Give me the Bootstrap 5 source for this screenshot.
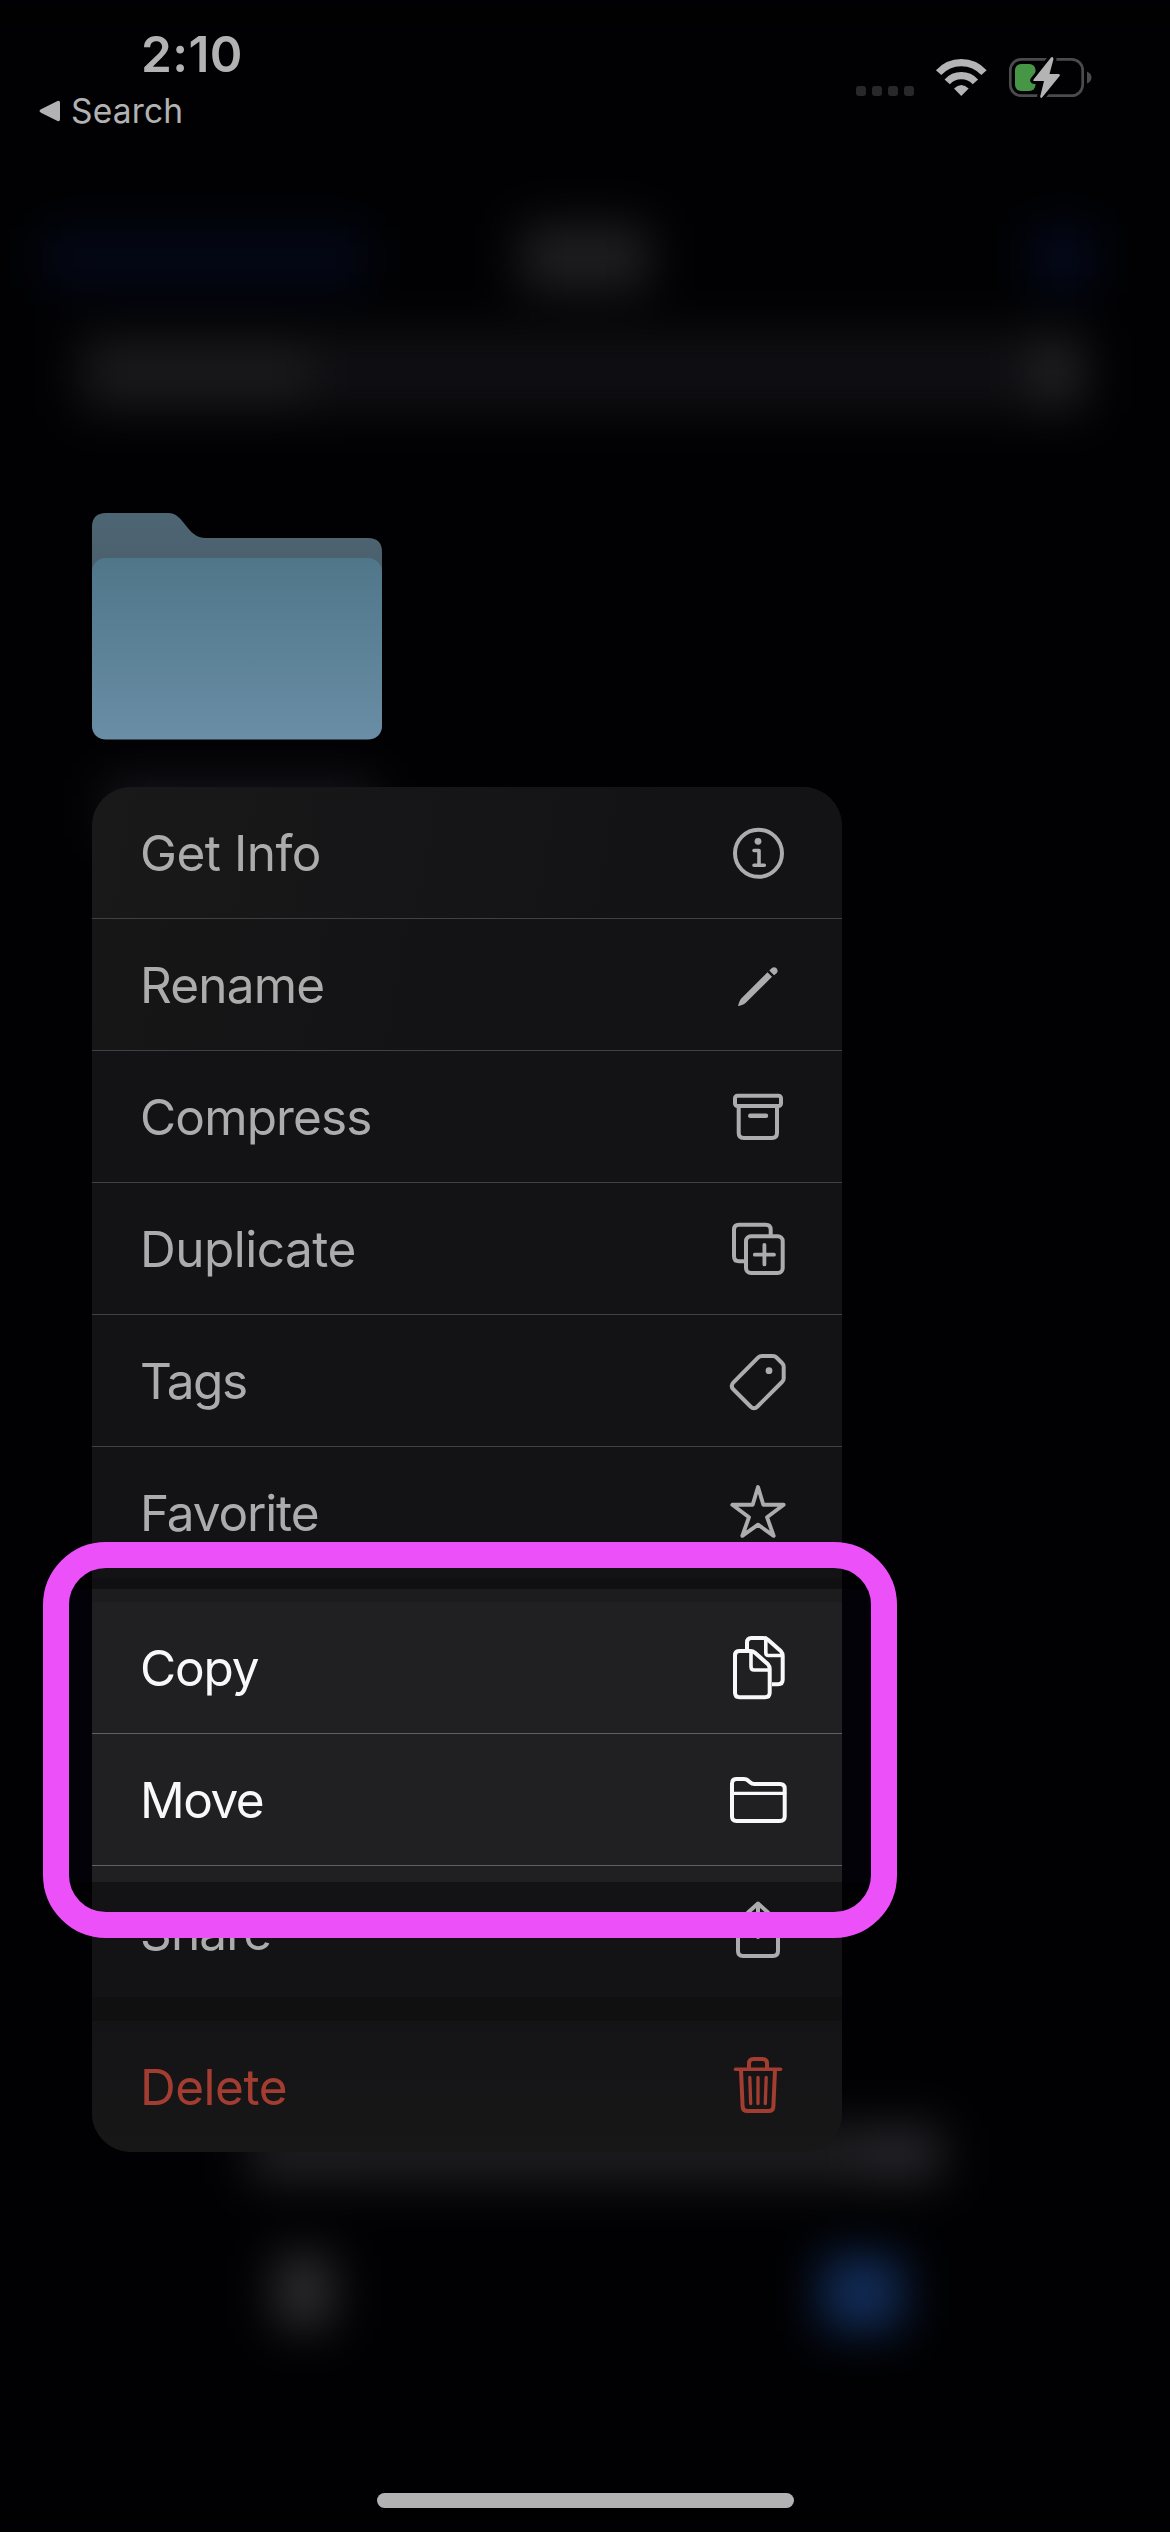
<!DOCTYPE html>
<html lang="en">
<head>
<meta charset="utf-8">
<meta name="viewport" content="width=device-width, initial-scale=1">
<title>Files</title>
<link href="https://cdn.jsdelivr.net/npm/bootstrap@5.3.0/dist/css/bootstrap.min.css" rel="stylesheet">
<style>
  body { background: #010103; font-family: Inter, "Liberation Sans", sans-serif; }
  .phone { width: 1170px; height: 2532px; }
  .backdrop-art { top: 0; left: 0; z-index: 0; }
  .phone > header, .phone > main, .phone > footer { z-index: 1; }

  /* status bar */
  .status-bar { height: 513px; color: #b2b2b3; padding: 24px 0 0 39px; }
  .clock { font-size: 49.5px; font-weight: 600; line-height: 60px; padding-left: 102px; letter-spacing: .4px; }
  .back-link { font-size: 33.5px; line-height: 40px; gap: 10px; margin-top: 7px; letter-spacing: .2px; }
  .status-icons { padding: 31px 76px 0 0; }

  .folder-area { padding-left: 92px; }
  .folder-art { margin-bottom: 47px; }

  /* context menu */
  .ctx-menu { width: 750px; border-radius: 39px; overflow: hidden; background: #131315; color: #acacad; }
  .ctx-row { height: 131px; padding: 0 52px 0 48px; background: #131315; font-size: 49.5px; line-height: 60px; letter-spacing: -.85px; }
  .ctx-row + .ctx-row { border-top: 1px solid #404042; height: 132px; }
  .ctx-row svg { overflow: visible; fill: none; stroke: currentColor; stroke-width: 4; stroke-linecap: round; stroke-linejoin: round; }
  .ctx-row .solid { fill: currentColor; stroke: none; }
  .track-loose { letter-spacing: -.5px; }
  .track-snug { letter-spacing: -1.15px; }
  .track-tight { letter-spacing: -1.5px; }
  .row-first { background: linear-gradient(100deg, #19191a, #131315 75%); }
  .row-second { background: linear-gradient(100deg, #161617, #131315 50%); }
  .ctx-row.row-lit { background: #202022; color: #f8f8fa; border-color: #606062; }
  .ctx-row.row-share { background: linear-gradient(#202022 16px, #131315 16px); border-color: #606062; }
  .ctx-row.row-delete { background: linear-gradient(#141416, #171718); color: #a33c31; }
  .gap-top { height: 24px; background: linear-gradient(#101012 11px, #1c1c1e 11px); }
  .gap-bottom { height: 24px; background: #101010; }

  /* callout frame around the highlighted rows */
  .callout { left: 43px; top: 1542px; width: 854px; height: 396px; border: 26px solid #ec50f8; border-radius: 63px; z-index: 3; }

  .home-bar { width: 417px; height: 15px; border-radius: 8px; background: #b2b2b2; margin-bottom: 24px; }
</style>
<script src="https://cdn.jsdelivr.net/npm/bootstrap@5.3.0/dist/js/bootstrap.bundle.min.js"></script>
</head>
<body>
<div class="phone position-relative overflow-hidden d-flex flex-column">

  <!-- blurred screen behind the menu -->
  <svg class="backdrop-art position-absolute" width="1170" height="2532" viewBox="0 0 1170 2532" aria-hidden="true">
    <defs>
      <filter id="soft" filterUnits="userSpaceOnUse" x="-100" y="0" width="1400" height="2532" color-interpolation-filters="sRGB"><feGaussianBlur stdDeviation="23"/></filter>
    </defs>
    <g filter="url(#soft)">
      <rect x="-100" y="0" width="1400" height="2532" fill="#010103"/>
      <rect x="42" y="228" width="326" height="60" fill="#040817"/>
      <rect x="520" y="224" width="130" height="68" fill="#1e1e21"/>
      <rect x="1030" y="225" width="66" height="66" fill="#04091b"/>
      <rect x="75" y="330" width="1015" height="84" fill="#0f0f13"/>
      <rect x="90" y="346" width="220" height="56" fill="#1a1a1d"/>
      <rect x="1030" y="340" width="50" height="64" fill="#202023"/>
      <rect x="105" y="778" width="270" height="60" fill="#15141a"/>
      <rect x="250" y="2126" width="110" height="56" fill="#202024"/>
      <rect x="360" y="2126" width="530" height="56" fill="#1f1f22"/>
      <rect x="860" y="2126" width="82" height="56" fill="#25252a"/>
      <rect x="275" y="2254" width="58" height="74" fill="#2d2d31"/>
      <rect x="822" y="2256" width="80" height="74" fill="#122d5a"/>
    </g>
    <rect x="69" y="1589" width="803" height="293" fill="#030208"/>
  </svg>

  <header class="status-bar position-relative d-flex justify-content-between align-items-start">
    <div>
      <div class="clock">2:10</div>
      <div class="back-link d-flex align-items-center">
        <svg width="22" height="22" viewBox="0 0 22 22" fill="#b2b2b3"><path d="M18.5 1 2 9.3Q-1 11 2 12.7L18.5 21Q21 22 21 19V3Q21 0 18.5 1Z"/></svg>
        <span>Search</span>
      </div>
    </div>
    <div class="status-icons">
      <svg class="d-block" width="238" height="46" viewBox="856 55 238 46">
        <g fill="#28282a">
          <rect x="856" y="86" width="10" height="10" rx="3"/><rect x="872" y="86" width="10" height="10" rx="3"/>
          <rect x="888" y="86" width="10" height="10" rx="3"/><rect x="904" y="86" width="10" height="10" rx="3"/>
        </g>
        <g fill="none" stroke="#b4b4b4" stroke-width="7.2">
          <path d="M938.6 72.7A30.5 30.5 0 0 1 984 72.7"/>
          <path d="M947.2 81.8A19 19 0 0 1 975.4 81.8"/>
        </g>
        <path d="M954 88.5Q961.3 81.5 968.7 88.5L961.3 96Z" fill="#b4b4b4"/>
        <rect x="1010.3" y="59.3" width="72.4" height="36.4" rx="11" fill="none" stroke="#4b4b4d" stroke-width="2.7"/>
        <path d="M1087 71.500Q1091.500 73.500 1091.500 77.500T1087 83.500Z" fill="#4b4b4d"/>
        <rect x="1015" y="64" width="20.500" height="27" rx="6" fill="#469646"/>
        <path d="M1051 57.500 1033.600 79.500Q1032.500 81 1034.500 81H1044L1040.200 96.500Q1040.500 99 1042.500 97L1059.600 76Q1060.500 74 1058.500 74H1049.500L1053.500 59Q1053 56 1051 57.500Z" fill="#b4b4b4" stroke="#010103" stroke-width="6" paint-order="stroke"/>
      </svg>
    </div>
  </header>

  <main class="folder-area position-relative">
    <svg class="folder-art d-block" width="290" height="227" viewBox="0 0 290 227">
      <defs>
        <linearGradient id="front" x1="0" y1="0" x2="0" y2="1"><stop offset="0" stop-color="#50768a"/><stop offset="1" stop-color="#698ea5"/></linearGradient>
        <linearGradient id="rear" x1="0" y1="0" x2="0" y2="1"><stop offset="0" stop-color="#4e6573"/><stop offset=".25" stop-color="#4a606d"/></linearGradient>
      </defs>
      <path d="M14 0H76C93 0 94 25 114 25H276Q290 25 290 39V212Q290 226 276 226H14Q0 226 0 212V14Q0 0 14 0Z" fill="url(#rear)"/>
      <rect y="45" width="290" height="181.500" rx="14" fill="url(#front)"/>
    </svg>

    <div class="ctx-menu">
      <div class="ctx-row row-first d-flex align-items-center justify-content-between">
        <span class="track-loose">Get Info</span>
        <svg width="64" height="65" viewBox="0 0 64 65"><circle cx="32.500" cy="33.300" r="23.500"/><circle class="solid" cx="32" cy="21.300" r="3.400"/><path d="M28 30.500H33V45.300M28 45.300H38.300" stroke-width="3.600"/></svg>
      </div>
      <div class="ctx-row row-second d-flex align-items-center justify-content-between">
        <span>Rename</span>
        <svg width="64" height="65" viewBox="0 0 64 65"><path class="solid" d="M41.500 20.200 46 24.700 19.300 51.200Q17.500 52.700 12.700 54Q11.800 54 12.300 52.700Q13.500 48.500 15 46.700ZM43.300 18.500 45.600 16.300Q47.800 14.500 50.300 16Q53 19 50.300 21.500L48 23.200Z"/></svg>
      </div>
      <div class="ctx-row d-flex align-items-center justify-content-between">
        <span>Compress</span>
        <svg width="64" height="65" viewBox="0 0 64 65"><rect x="9" y="11.700" width="46" height="10.300" rx="2.500"/><path d="M12.700 22V49Q12.700 54 17.700 54H46Q51 54 51 49V22"/><path d="M24.200 31.700H40" stroke-width="4.400"/></svg>
      </div>
      <div class="ctx-row d-flex align-items-center justify-content-between">
        <span class="track-loose">Duplicate</span>
        <svg width="64" height="65" viewBox="0 0 64 65"><path d="M18 45.300H13Q8 45.300 8 40.300V13.700Q8 8.700 13 8.700H39.700Q44.700 8.700 44.700 13.700V19" stroke-linecap="butt"/><rect x="20" y="20.300" width="36.700" height="36.700" rx="5"/><path d="M28.800 38.700H48M38.400 28.800V48.400" stroke-width="3.800"/></svg>
      </div>
      <div class="ctx-row d-flex align-items-center justify-content-between">
        <span class="track-tight">Tags</span>
        <svg width="64" height="65" viewBox="0 0 64 65"><path d="M36 8H47Q49 8 50.500 9.500L56 15Q57.700 16.700 57.700 18.500V30.500Q57.700 32.500 56 34L31.500 58.500Q28 62 24.500 58.500L7.500 41.500Q4 37.900 7.500 34.300L32 9.700Q33.700 8 36 8Z"/><circle class="solid" cx="43" cy="22.700" r="3.400"/></svg>
      </div>
      <div class="ctx-row d-flex align-items-center justify-content-between">
        <span class="track-snug">Favorite</span>
        <svg width="64" height="65" viewBox="0 0 64 65"><path d="M32 7 37.300 24.800H57.700L41 37.200 47.700 55.800 32 44.700 16.300 55.800 23 37.200 6.300 24.800H26.700Z" stroke-width="3.900"/></svg>
      </div>
      <div class="gap-top"></div>
      <div class="ctx-row row-lit d-flex align-items-center justify-content-between">
        <span class="track-snug">Copy</span>
        <svg width="64" height="65" viewBox="0 0 64 65"><path d="M13 16H24Q27 16 29 17.800L42 29.300Q43.700 31 43.700 34V57.500Q43.700 62.300 39 62.300H13.500Q9 62.300 9 57.500V20.500Q9 16 13 16Z"/><path d="M25 16V31.500Q25 35 28 35H43" stroke-width="3.600"/><path d="M21 14V7.500Q21 3 25.500 3H37Q40 3 42 4.700L55 16.300Q56.700 18 56.700 21V44.500Q56.700 49.300 52 49.300H46" stroke-linecap="butt"/><path d="M39.800 3V17.500Q39.800 20.500 42.500 20.500H56" stroke-width="3.600"/></svg>
      </div>
      <div class="ctx-row row-lit d-flex align-items-center justify-content-between">
        <span class="track-tight">Move</span>
        <svg width="64" height="65" viewBox="0 0 64 65"><path d="M6 49.500V16.500Q6 12 10.500 12H18Q20.500 12 22 13.500L24 15.200Q26 17 28.500 17H54Q58.700 17 58.700 21.500V49.500Q58.700 54 54 54H10.500Q6 54 6 49.500Z"/><path d="M6 26.300H58.700" stroke-width="3.300"/></svg>
      </div>
      <div class="ctx-row row-share d-flex align-items-center justify-content-between">
        <span>Share</span>
        <svg width="64" height="65" viewBox="0 0 64 65"><path d="M22.500 20H17Q12 20 12 25V52Q12 57 17 57H47Q52 57 52 52V25Q52 20 47 20H41.500M32 38V4.500M22 13.500 32 4.500 42 13.500"/></svg>
      </div>
      <div class="gap-bottom"></div>
      <div class="ctx-row row-delete d-flex align-items-center justify-content-between">
        <span class="track-loose">Delete</span>
        <svg width="64" height="65" viewBox="0 0 64 65"><path d="M9.500 15.200H54.500" stroke-width="3.600"/><path d="M23 15V9.500Q23 5 27.500 5H36.500Q41 5 41 9.500V15M15 16 16.600 52.500Q16.900 57 21.500 57H42.500Q47.100 57 47.400 52.500L49 16"/><path d="M23.800 23.500 24.700 49.500M32 23.500V49.500M40.200 23.500 39.300 49.500" stroke-width="3.300"/></svg>
      </div>
    </div>
  </main>

  <div class="callout position-absolute" aria-hidden="true"></div>

  <footer class="mt-auto position-relative d-flex justify-content-center">
    <div class="home-bar"></div>
  </footer>
</div>
</body>
</html>
